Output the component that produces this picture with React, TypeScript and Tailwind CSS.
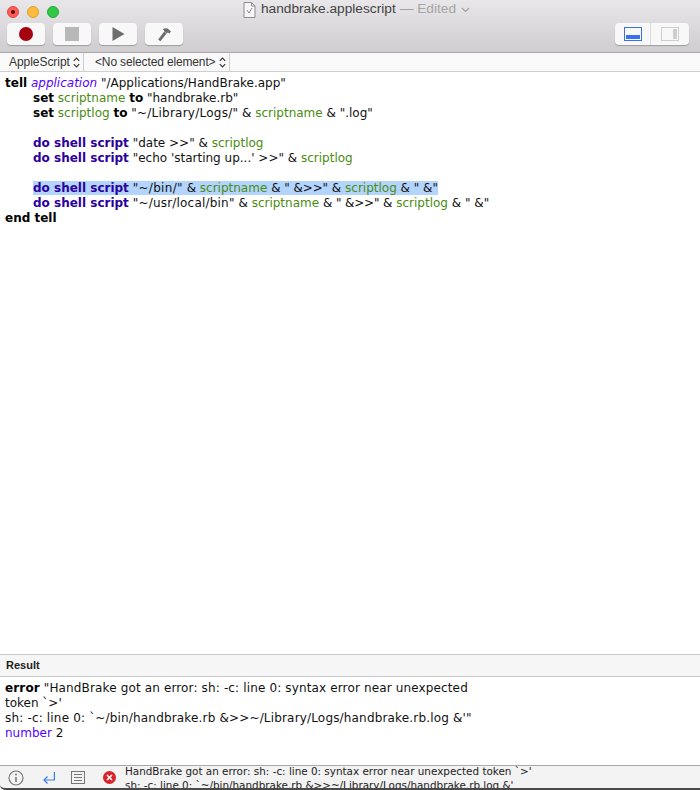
import type { ReactNode } from 'react';

const mono = { fontFamily: '"DejaVu Sans", Verdana, sans-serif' };

const Kw = ({ children }: { children: ReactNode }) => <span className="font-bold text-black">{children}</span>;
const Cmd = ({ children }: { children: ReactNode }) => <span className="font-bold text-[#2c009f]">{children}</span>;
const Var = ({ children }: { children: ReactNode }) => <span className="text-[#4a8c11]">{children}</span>;

function Line({ indent, children }: { indent?: boolean; children?: ReactNode }) {
  return <div className={`h-[15px] whitespace-pre ${indent ? 'pl-[28px]' : ''}`}>{children}</div>;
}

function Chevrons() {
  return (
    <svg width="7" height="11" viewBox="0 0 7 11" fill="none" stroke="#333" strokeWidth="1.1" className="ml-[3px]">
      <path d="M0.8 3.8 L3.5 1 L6.2 3.8" />
      <path d="M0.8 7.2 L3.5 10 L6.2 7.2" />
    </svg>
  );
}

function ToolButton({ children }: { children: ReactNode }) {
  return (
    <div className="w-[38px] h-[22px] rounded-[4px] bg-[#f9f8f9] shadow-[0_1px_1px_rgba(0,0,0,0.25)] flex items-center justify-center">
      {children}
    </div>
  );
}

export default function App() {
  return (
    <div className="w-[700px] h-[790px] flex flex-col overflow-hidden bg-white text-[#111]" style={mono}>
      {/* title bar + toolbar */}
      <div className="h-[53px] shrink-0 flex flex-col bg-gradient-to-b from-[#e9e7e9] to-[#cfcdcf] border-b border-[#a9a7a9]">
        <div className="relative h-[23px] shrink-0 flex items-center pl-[7px] gap-[8px]">
          <div className="w-[12px] h-[12px] rounded-full bg-[#fc5b57] border border-[#e2463f] flex items-center justify-center">
            <div className="w-[4px] h-[4px] rounded-full bg-[#5a0a08]" />
          </div>
          <div className="w-[12px] h-[12px] rounded-full bg-[#fdbc40] border border-[#dfa023]" />
          <div className="w-[12px] h-[12px] rounded-full bg-[#33c748] border border-[#24a932]" />
          <div
            className="absolute left-[243px] top-0 h-[19px] flex items-center text-[13.7px]"
            style={{ fontFamily: '"Liberation Sans", Arial, sans-serif' }}
          >
            <svg width="13" height="16" viewBox="0 0 13 16" className="mr-[5px]" fill="#f6f6f6" stroke="#8d8b8d">
              <path d="M1 .5 H8.5 L12 4 V15.5 H1 Z" />
              <path d="M8.5 .5 V4 H12" fill="none" />
              <path d="M4 8 L6 11 L9 6" fill="none" />
            </svg>
            <span className="text-[#444]">handbrake.applescript</span>
            <span className="text-[#a5a3a5] ml-[4px]">— Edited</span>
            <svg width="9" height="6" viewBox="0 0 9 6" fill="none" stroke="#a5a3a5" strokeWidth="1.2" className="ml-[5px]">
              <path d="M1 1 L4.5 4.5 L8 1" />
            </svg>
          </div>
        </div>
        <div className="flex items-start pl-[7px] pr-[11px] gap-[8px]">
          <ToolButton>
            <div className="w-[14px] h-[14px] rounded-full bg-[#a5000f]" />
          </ToolButton>
          <ToolButton>
            <div className="w-[14px] h-[14px] bg-[#b9b8b9]" />
          </ToolButton>
          <ToolButton>
            <svg width="13" height="14" viewBox="0 0 13 14" fill="#6e6d6e">
              <path d="M0.5 0 L12.5 7 L0.5 14 Z" />
            </svg>
          </ToolButton>
          <ToolButton>
            <svg width="15" height="15" viewBox="0 0 15 15" fill="#6e6d6e">
              <path d="M7.2 4.6 L9.4 6.8 L3.4 14.2 L1.2 12.4 Z" />
              <path d="M5.6 2.6 C7.4 1 9.6 .8 11 1.8 L14 4.6 L12.4 6.4 L10.6 5.4 L9.6 6.4 L7.2 4.2 C7 3.4 6.4 2.8 5.6 2.6 Z" />
            </svg>
          </ToolButton>
          <div className="ml-auto w-[74px] h-[22px] rounded-[4px] bg-[#f9f8f9] shadow-[0_1px_1px_rgba(0,0,0,0.25)] flex items-center">
            <div className="w-[36px] h-full flex items-center justify-center border-r border-[#dcdbdc]">
              <div className="w-[18px] h-[14px] border border-[#3a6ff0] flex items-end p-[1px]">
                <div className="w-full h-[4px] bg-[#3a6ff0]" />
              </div>
            </div>
            <div className="flex-1 h-full flex items-center justify-center">
              <div className="w-[18px] h-[14px] border border-[#cfcecf] flex justify-end p-[1px]">
                <div className="w-[4px] h-full bg-[#cfcecf]" />
              </div>
            </div>
          </div>
        </div>
      </div>

      {/* navigation bar */}
      <div
        className="h-[19px] shrink-0 flex bg-[#f9f9f9] border-b border-[#cfcfcf] text-[12px] text-[#333]"
        style={{ fontFamily: '"Liberation Sans", Arial, sans-serif' }}
      >
        <div className="w-[84px] pl-[9px] flex items-center border-r border-[#cfcfcf]">
          <span className="tracking-[-0.05px]">AppleScript</span>
          <Chevrons />
        </div>
        <div className="w-[146px] pl-[11px] flex items-center border-r border-[#cfcfcf]">
          <span className="tracking-[-0.14px]">{'<No selected element>'}</span>
          <span className="ml-[1px]">
            <Chevrons />
          </span>
        </div>
      </div>

      {/* script editor */}
      <div className="flex-1 min-h-0 pt-[4px] pl-[5px] text-[12px] leading-[15px]">
        <Line>
          <Kw>tell</Kw> <span className="italic text-[#5500ff]">application</span> "/Applications/HandBrake.app"
        </Line>
        <Line indent>
          <Kw>set</Kw> <Var>scriptname</Var> <Kw>to</Kw> "handbrake.rb"
        </Line>
        <Line indent>
          <Kw>set</Kw> <Var>scriptlog</Var> <Kw>to</Kw> <span className="tracking-[0.24px]">"~/Library/Logs/"</span> &amp; <Var>scriptname</Var> &amp; ".log"
        </Line>
        <Line />
        <Line indent>
          <Cmd>do shell script</Cmd> "date &gt;&gt;" &amp; <Var>scriptlog</Var>
        </Line>
        <Line indent>
          <Cmd>do shell script</Cmd> "echo 'starting up...' &gt;&gt;" &amp; <Var>scriptlog</Var>
        </Line>
        <Line />
        <Line indent>
          <span className="bg-[#b3d4fc]">
            <Cmd>do shell script</Cmd> <span className="tracking-[0.3px]">"~/bin/"</span> &amp; <Var>scriptname</Var> &amp; <span className="tracking-[-0.1px]">" &amp;&gt;&gt;"</span> &amp; <Var>scriptlog</Var> &amp; " &amp;"
          </span>
        </Line>
        <Line indent>
          <Cmd>do shell script</Cmd> <span className="tracking-[0.2px]">"~/usr/local/bin"</span> &amp; <Var>scriptname</Var> &amp; <span className="tracking-[-0.2px]">" &amp;&gt;&gt;"</span> &amp; <Var>scriptlog</Var> &amp; " &amp;"
        </Line>
        <Line>
          <Kw>end tell</Kw>
        </Line>
      </div>

      {/* result header */}
      <div
        className="h-[23px] shrink-0 flex items-center pl-[6px] bg-[#f6f6f6] border-y border-[#c9c9c9] text-[11px] font-bold text-[#222]"
        style={{ fontFamily: '"Liberation Sans", Arial, sans-serif' }}
      >
        Result
      </div>

      {/* result body */}
      <div className="h-[88px] shrink-0 pt-[4px] pl-[5px] text-[12px] leading-[15px]">
        <div className="tracking-[0.14px]">
          <Kw>error</Kw> "HandBrake got an error: sh: -c: line 0: syntax error near unexpected
        </div>
        <div>token `&gt;'</div>
        <div className="tracking-[0.17px]">sh: -c: line 0: `~/bin/handbrake.rb &amp;&gt;&gt;~/Library/Logs/handbrake.rb.log &amp;'"</div>
        <div>
          <span className="text-[#5500ff]">number</span> 2
        </div>
      </div>

      {/* status bar */}
      <div className="h-[25px] shrink-0 flex items-start bg-[#f3f3f3] border-t border-b-2 border-t-[#a9a9a9] border-b-[#4a4a4a] rounded-bl-[5px] overflow-hidden">
        <svg width="16" height="16" viewBox="0 0 16 16" className="ml-[8px] mt-[4px]" fill="none" stroke="#777">
          <circle cx="8" cy="8" r="7" strokeWidth="1.2" />
          <path d="M8 7 V12" strokeWidth="1.6" />
          <circle cx="8" cy="4.6" r="1" fill="#777" stroke="none" />
        </svg>
        <svg width="12" height="12" viewBox="0 0 12 12" className="ml-[19px] mt-[6px]" fill="none" stroke="#3a7bea" strokeWidth="1.2">
          <path d="M11.4 0 V8 H1" />
          <path d="M4.5 4.5 L1 8 L4.5 11.5" />
        </svg>
        <svg width="14" height="13" viewBox="0 0 14 13" className="ml-[16px] mt-[5px]" fill="none" stroke="#777">
          <rect x=".5" y=".5" width="13" height="12" />
          <path d="M3 3.5 H11 M3 6.5 H11 M3 9.5 H11" />
        </svg>
        <div className="w-[13px] h-[13px] ml-[18px] mt-[5px] rounded-full bg-[#d8232a] flex items-center justify-center">
          <svg width="7" height="7" viewBox="0 0 7 7" stroke="#fff" strokeWidth="1.6">
            <path d="M1 1 L6 6 M6 1 L1 6" />
          </svg>
        </div>
        <div className="ml-[9px] -mt-[2px] text-[10.4px] leading-[14px] text-[#222] whitespace-pre">
          <div>HandBrake got an error: sh: -c: line 0: syntax error near unexpected token `&gt;'</div>
          <div>sh: -c: line 0: `~/bin/handbrake.rb &amp;&gt;&gt;~/Library/Logs/handbrake.rb.log &amp;'</div>
        </div>
      </div>
    </div>
  );
}
